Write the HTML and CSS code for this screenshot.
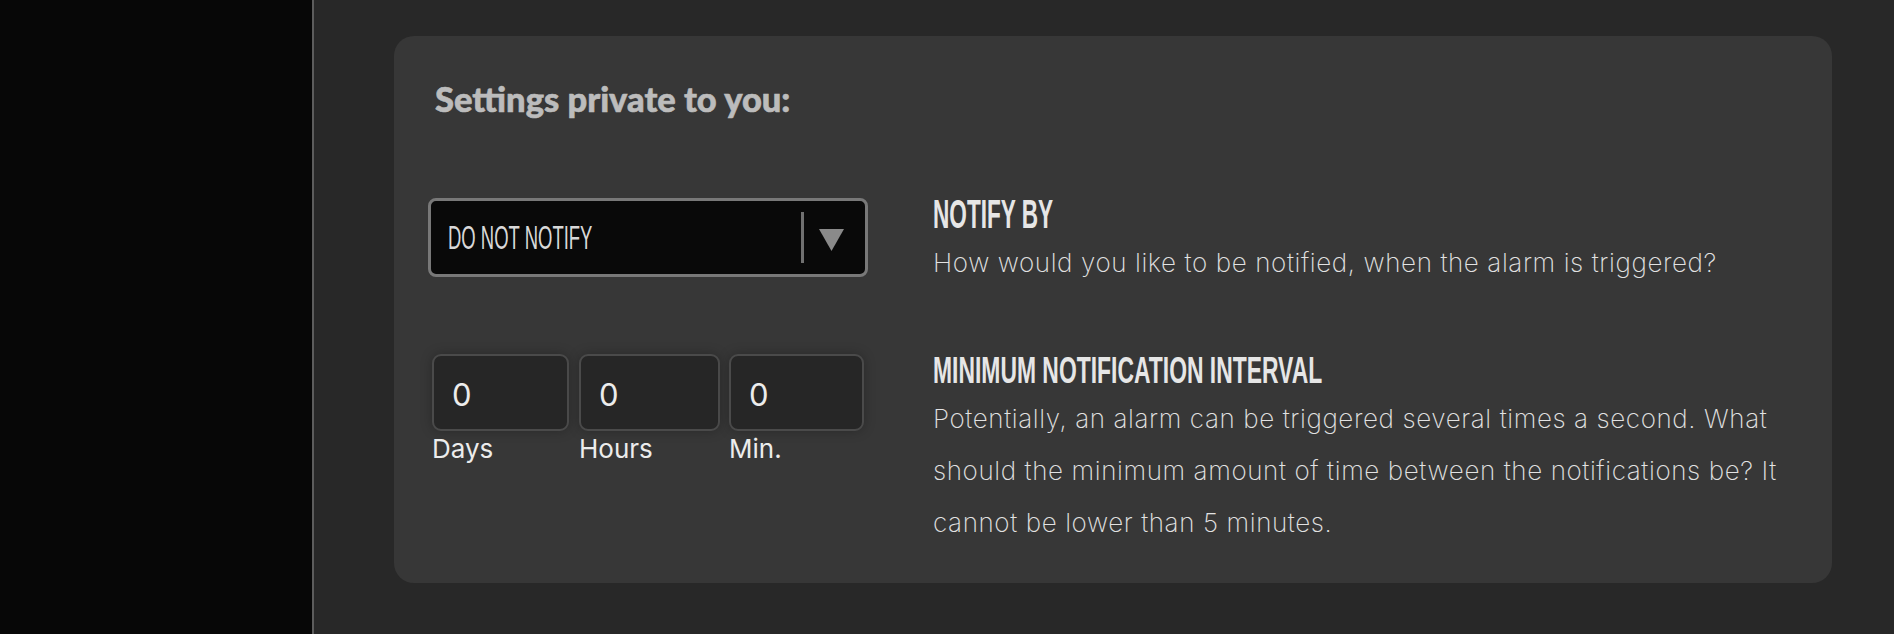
FILE: index.html
```html
<!DOCTYPE html>
<html lang="en">
<head>
<meta charset="utf-8">
<title>Settings</title>
<link rel="stylesheet" href="styles.css">
</head>
<body>
<div class="app">
  <aside class="sidebar"></aside>
  <main class="main">
    <section class="card">
      <h2 class="card-title">Settings private to you:</h2>

      <div class="control">
        <div class="select">
          <span class="select-value"><span class="cond cond-thin">DO NOT NOTIFY</span></span>
          <span class="select-sep"></span>
          <svg class="select-arrow" width="25" height="22" viewBox="0 0 25 22"><polygon points="0,0 25,0 12.5,22" fill="#8a8a8a"/></svg>
        </div>
      </div>
      <div class="info">
        <h3 class="info-title"><span class="cond cond-a">NOTIFY BY</span></h3>
        <p class="info-text">How would you like to be notified, when the alarm is triggered?</p>
      </div>

      <div class="control control-time">
        <div class="time">
          <label class="time-field f-days"><input class="time-input" type="text" value="0"><span class="time-label">Days</span></label>
          <label class="time-field f-hours"><input class="time-input" type="text" value="0"><span class="time-label">Hours</span></label>
          <label class="time-field f-min"><input class="time-input" type="text" value="0"><span class="time-label">Min.</span></label>
        </div>
      </div>
      <div class="info info-2">
        <h3 class="info-title info-title-2"><span class="cond cond-b">MINIMUM NOTIFICATION INTERVAL</span></h3>
        <p class="info-text">Potentially, an alarm can be triggered several times a second. What should the minimum amount of time between the notifications be? It cannot be lower than 5 minutes.</p>
      </div>
    </section>
  </main>
</div>
</body>
</html>
```

FILE: styles.css
```css
* { box-sizing: border-box; }
html, body { margin: 0; padding: 0; }
body {
  background: #282828;
  font-family: "Lato", "Liberation Sans", sans-serif;
  width: 1894px;
  height: 634px;
  overflow: hidden;
}
.app {
  display: flex;
  height: 634px;
}
.sidebar {
  width: 314px;
  flex: 0 0 314px;
  background: #070707;
  border-right: 2px solid #5c5c5c;
}
.main {
  flex: 1;
  padding: 36px 62px 0 80px;
}
.card {
  background: #373737;
  border-radius: 20px;
  padding: 43px 30px 34px 34px;
  display: grid;
  grid-template-columns: 440px 1fr;
  column-gap: 65px;
}
.card-title {
  grid-column: 1 / -1;
  margin: 0 0 79px 7px;
  font-family: "Lato", sans-serif;
  font-weight: 900;
  font-size: 34.5px;
  line-height: 40px;
  color: #bcbcbc;
  -webkit-text-stroke: 0.6px #bcbcbc;
}
.cond {
  display: inline-block;
  transform-origin: left center;
  white-space: nowrap;
}
.cond-thin { transform: scaleX(0.56); }
.cond-a { transform: scaleX(0.565); }
.cond-b { transform: scaleX(0.636); }

.select {
  height: 79px;
  border: 3px solid #787878;
  border-radius: 8px;
  background: #090909;
  display: flex;
  align-items: center;
  padding: 0 21px 0 17px;
}
.select-value {
  flex: 1;
  font-family: "Liberation Sans", sans-serif;
  font-size: 33px;
  line-height: 40px;
  color: #d8d8d8;
}
.select-sep {
  width: 3px;
  height: 51px;
  background: #707070;
  margin-right: 15px;
}
.select-arrow { display: block; margin-top: 4px; }

.info-title {
  margin: 0;
  font-family: "Liberation Sans Narrow", "Liberation Sans", sans-serif;
  font-weight: 700;
  font-size: 40px;
  line-height: 32px;
  color: #e6e6e6;
}
.info-title-2 {
  font-size: 36px;
  line-height: 30px;
  margin-top: 2px;
}
.info-text {
  margin: 7px 0 0;
  font-family: "Inter", sans-serif;
  font-weight: 200;
  font-size: 26px;
  letter-spacing: 0.6px;
  line-height: 52px;
  color: #e2e2e2;
}
.control-time, .info-2 { margin-top: 65px; }
.time {
  display: grid;
  grid-template-columns: 137px 141px 134px;
  column-gap: 10px;
  margin-left: 4px;
}
.f-min { margin-left: -1px; }
.time-field { display: flex; flex-direction: column; }
.time-input {
  width: 100%;
  height: 77px;
  margin: 0;
  border: 2px solid #4a4a4a;
  border-radius: 9px;
  background: #262626;
  box-shadow: 0 0 12px rgba(0, 0, 0, 0.25);
  padding: 4px 0 0 18px;
  font-family: "Inter", sans-serif;
  font-size: 31px;
  color: #ececec;
  outline: none;
}
.time-label {
  margin-top: 3px;
  font-family: "Inter", sans-serif;
  font-size: 26px;
  line-height: 30px;
  color: #ececec;
}
```
